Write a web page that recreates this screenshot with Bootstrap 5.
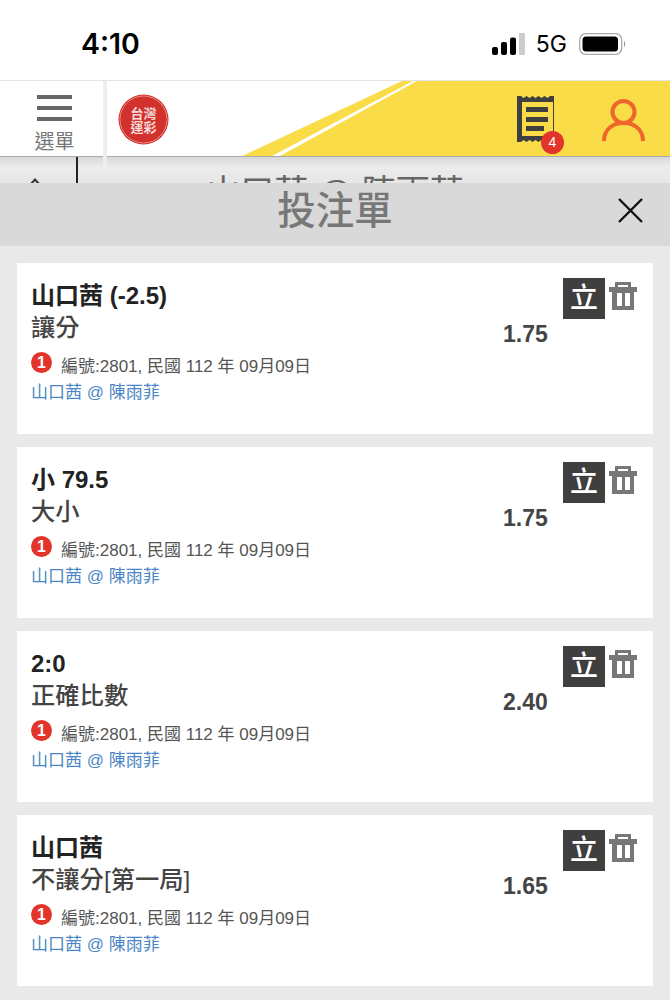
<!DOCTYPE html>
<html lang="zh-Hant">
<head>
<meta charset="utf-8">
<title>投注單</title>
<link href="https://cdn.jsdelivr.net/npm/bootstrap@5.3.0/dist/css/bootstrap.min.css" rel="stylesheet">
<style>
html,body{height:1000px;overflow:hidden}
body{background:#e9e9e9;font-family:"Liberation Sans","Noto Sans CJK TC",sans-serif;color:#222}
.status-bar{height:80px;background:#fff;padding:0 44px 0 81px}
.clock{font-family:Inter,"Liberation Sans",sans-serif;font-weight:600;font-size:28.5px;color:#000;line-height:1;margin-top:8px}
.net{font-family:Inter,"Liberation Sans",sans-serif;font-size:23px;color:#000;line-height:1;margin:0 12px 0 11px}
.top-head{height:77px;background:#fff;border-top:1px solid #e4e4e4;border-bottom:1px solid #aaa;position:relative;z-index:2}
.yellow-art{position:absolute;left:0;top:0;width:670px;height:75px}
.menu-cell{width:107px;height:75px;position:relative;padding:14px 0 0 6px;border-right:4px solid #eee}
.menu-word{font-size:20px;line-height:1;color:#777;margin-top:7px}
.menu-bar{width:35px;height:4px;background:#666;margin:0 auto 7px}
.menu-bars{height:30px}
.logo-mark{position:absolute;left:118px;top:13px}
.bill-wrap{position:absolute;left:516px;top:15px;width:46px;height:58px}
.bill-count{position:absolute;left:25px;top:35px;width:23px;height:23px;border-radius:50%;background:#e2342a;color:#fff;font-size:14px;line-height:23px;text-align:center}
.user-wrap{position:absolute;left:602px;top:17px}
.rail{position:absolute;left:103px;top:75px;width:4px;height:13px;background:#eee;z-index:3}
.peek{height:26px;overflow:hidden;position:relative;background:linear-gradient(#d8d8d8,#ececec 10px,#e6e6e6);text-align:center}
.peek-text{font-size:34px;line-height:40px;color:#666;padding-top:15px}
.peek-line{position:absolute;left:76px;top:0;width:1.5px;height:26px;background:#222}
.peek-arrow{position:absolute;left:31px;top:23px;width:8px;height:8px;border-left:2px solid #333;border-top:2px solid #333;transform:rotate(45deg)}
.slip-head{height:63px;background:#d9d9d9;position:relative;padding-bottom:6px}
.slip-title{font-size:38.5px;font-weight:500;color:#777;line-height:1}
.slip-close{position:absolute;left:617px;top:14px}
.slip-list{padding:17px 17px 0;gap:13px}
.slip-card{height:171px;border:0;border-radius:0;background:#fff;position:relative;padding:15px 0 0 14px}
.pick{font-size:24px;font-weight:700;line-height:36px;color:#222}
.market{font-size:24.3px;line-height:28px;font-weight:500;color:#444;margin-bottom:12px}
.meta{font-size:17px;line-height:26px;color:#555}
.num-dot{width:21px;height:21px;border-radius:50%;background:#e2342a;color:#fff;font-size:16px;font-weight:700;line-height:21px;text-align:center;margin:-9px 9px 0 0;flex:none}
.teams{font-size:17px;line-height:26px;color:#4a86c5}
.odds{position:absolute;left:486px;top:56px;font-size:23px;font-weight:700;color:#444;line-height:30px}
.act{position:absolute;left:546px;top:15px;gap:4px}
.now-btn{width:42px;height:41px;background:#3f3f3f;color:#fff;font-size:28px;font-weight:500;line-height:41px;text-align:center;border-radius:0}
.trash-ico{margin-top:4px}
</style>
</head>
<body>
<div class="status-bar d-flex align-items-center justify-content-between">
  <div class="clock">4:10</div>
  <div class="d-flex align-items-center" style="margin-top:8px">
    <svg width="33" height="22" viewBox="0 0 33 22"><rect x="0" y="14" width="6" height="8" rx="2" fill="#000"/><rect x="9" y="9" width="6" height="13" rx="2" fill="#000"/><rect x="18" y="4.500" width="6" height="17.500" rx="2" fill="#000"/><rect x="27" y="0" width="6" height="22" rx="1" fill="#ccc"/></svg>
    <span class="net">5G</span>
    <svg width="47" height="22" viewBox="0 0 47 22"><rect x=".7" y=".7" width="42" height="20.600" rx="6" fill="none" stroke="#aaa" stroke-width="1.300"/><rect x="3.500" y="3.500" width="35.500" height="15" rx="3.500" fill="#000"/><path d="M45 8v6c1.500-.5 1.500-5.500 0-6z" fill="#999"/></svg>
  </div>
</div>

<header class="top-head">
  <svg class="yellow-art" viewBox="0 0 670 75"><polygon points="242,75 402,0 670,0 670,75" fill="#f9dc48"/><polygon points="272,75 280,75 417,0 413,0" fill="#fff"/></svg>
  <div class="menu-cell text-center">
    <div class="menu-bars"><div class="menu-bar"></div><div class="menu-bar"></div><div class="menu-bar"></div></div>
    <div class="menu-word">選單</div>
  </div>
  <svg class="logo-mark" width="51" height="51" viewBox="0 0 51 51"><circle cx="25.500" cy="25.500" r="25" fill="#d1322d"/><circle cx="25.500" cy="25.500" r="23.500" fill="none" stroke="#e98a85" stroke-width="1"/><text x="25.500" y="24" text-anchor="middle" font-size="13" font-weight="700" fill="#f7dcda" font-family="Noto Sans CJK TC">台灣</text><text x="25.500" y="38" text-anchor="middle" font-size="13" font-weight="700" fill="#f7dcda" font-family="Noto Sans CJK TC">運彩</text></svg>
  <div class="bill-wrap">
    <svg width="43" height="47" viewBox="0 0 43 47"><path d="M1 0h4l2.500 2 3-2 3 2 3-2 3 2 3-2 3 2 3-2 3 2 2.500-2h4v46h-4l-2.500-2-3 2-3-2-3 2-3-2-3 2-3-2-3 2-3-2-2.500 2H1z" fill="#3f3f3f"/><rect x="6" y="6" width="31" height="34" fill="#f9dc48"/><rect x="10" y="11" width="22" height="5" fill="#3f3f3f"/><rect x="10" y="21" width="22" height="5" fill="#3f3f3f"/><rect x="10" y="30" width="18" height="5" fill="#3f3f3f"/></svg>
    <div class="bill-count">4</div>
  </div>
  <svg class="user-wrap" width="43" height="44" viewBox="0 0 43 44"><circle cx="21.500" cy="14" r="11" fill="none" stroke="#f0662a" stroke-width="4"/><path d="M2 43c0-11 8-18 19.500-18S41 32 41 43" fill="none" stroke="#f0662a" stroke-width="4"/></svg>
  <div class="rail"></div>
</header>

<div class="peek">
  <div class="peek-arrow"></div>
  <div class="peek-line"></div>
  <div class="peek-text">山口茜 @ 陳雨菲</div>
</div>

<div class="slip-head d-flex align-items-center justify-content-center">
  <div class="slip-title">投注單</div>
  <svg class="slip-close" width="27" height="27" viewBox="0 0 27 27"><path d="M2 2l23 23M25 2L2 25" stroke="#111" stroke-width="2.400" fill="none"/></svg>
</div>

<main class="slip-list d-flex flex-column">
  <article class="card slip-card">
    <div class="pick">山口茜 (-2.5)</div>
    <div class="market">讓分</div>
    <div class="meta d-flex align-items-center"><span class="num-dot">1</span>編號:2801, 民國 112 年 09月09日</div>
    <div class="teams">山口茜 @ 陳雨菲</div>
    <div class="odds">1.75</div>
    <div class="act d-flex align-items-start">
      <div class="now-btn">立</div>
      <svg class="trash-ico" width="28" height="28" viewBox="0 0 28 28"><path d="M6 5V0h16v5h6v5h-3v18H3V10H0V5zm3 0h10V3H9zm-1 6v13h5V11zm8 0v13h5V11z" fill="#777" fill-rule="evenodd"/></svg>
    </div>
  </article>
  <article class="card slip-card">
    <div class="pick">小 79.5</div>
    <div class="market">大小</div>
    <div class="meta d-flex align-items-center"><span class="num-dot">1</span>編號:2801, 民國 112 年 09月09日</div>
    <div class="teams">山口茜 @ 陳雨菲</div>
    <div class="odds">1.75</div>
    <div class="act d-flex align-items-start">
      <div class="now-btn">立</div>
      <svg class="trash-ico" width="28" height="28" viewBox="0 0 28 28"><path d="M6 5V0h16v5h6v5h-3v18H3V10H0V5zm3 0h10V3H9zm-1 6v13h5V11zm8 0v13h5V11z" fill="#777" fill-rule="evenodd"/></svg>
    </div>
  </article>
  <article class="card slip-card">
    <div class="pick">2:0</div>
    <div class="market">正確比數</div>
    <div class="meta d-flex align-items-center"><span class="num-dot">1</span>編號:2801, 民國 112 年 09月09日</div>
    <div class="teams">山口茜 @ 陳雨菲</div>
    <div class="odds">2.40</div>
    <div class="act d-flex align-items-start">
      <div class="now-btn">立</div>
      <svg class="trash-ico" width="28" height="28" viewBox="0 0 28 28"><path d="M6 5V0h16v5h6v5h-3v18H3V10H0V5zm3 0h10V3H9zm-1 6v13h5V11zm8 0v13h5V11z" fill="#777" fill-rule="evenodd"/></svg>
    </div>
  </article>
  <article class="card slip-card">
    <div class="pick">山口茜</div>
    <div class="market">不讓分[第一局]</div>
    <div class="meta d-flex align-items-center"><span class="num-dot">1</span>編號:2801, 民國 112 年 09月09日</div>
    <div class="teams">山口茜 @ 陳雨菲</div>
    <div class="odds">1.65</div>
    <div class="act d-flex align-items-start">
      <div class="now-btn">立</div>
      <svg class="trash-ico" width="28" height="28" viewBox="0 0 28 28"><path d="M6 5V0h16v5h6v5h-3v18H3V10H0V5zm3 0h10V3H9zm-1 6v13h5V11zm8 0v13h5V11z" fill="#777" fill-rule="evenodd"/></svg>
    </div>
  </article>
</main>
</body>
</html>
